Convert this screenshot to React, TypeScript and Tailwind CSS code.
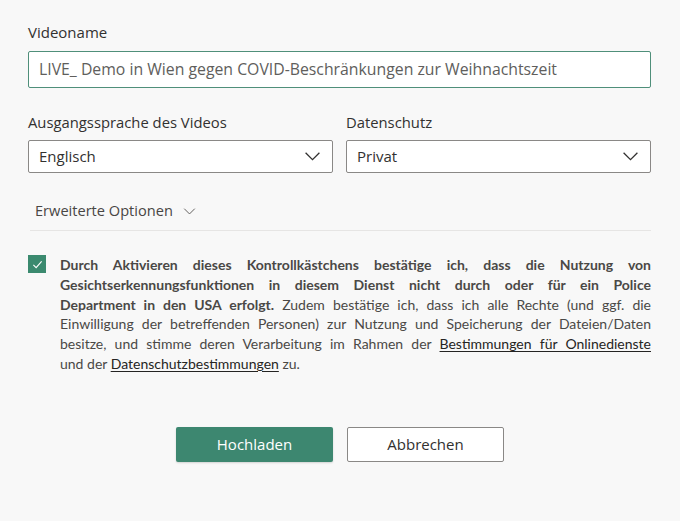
import React from "react";

function Chevron({ className = "" }: { className?: string }) {
  return (
    <svg viewBox="0 0 16 16" className={className} fill="none" stroke="currentColor" strokeWidth={1.2}>
      <path d="M1.5 4.5 L8 11 L14.5 4.5" />
    </svg>
  );
}

function Select({ value }: { value: string }) {
  return (
    <div className="flex h-[33px] items-center justify-between rounded-[2px] border border-[#8a8886] bg-white pl-[10px] pr-[11px] text-[15px] text-[#323130]">
      <span>{value}</span>
      <Chevron className="h-[17px] w-[17px] text-[#323130]" />
    </div>
  );
}

const justifyLine = "text-justify [text-align-last:justify] whitespace-nowrap";
const sans = "font-['Open_Sans',sans-serif]";

export default function App() {
  return (
    <div className={`min-h-[521px] w-full bg-[#f8f8f8] px-[28px] pt-[22px] pr-[29px] ${sans}`}>
      <div className="h-[20px] text-[15px] leading-[20px] text-[#323130]">Videoname</div>
      <div className="mt-[9px] flex h-[37px] items-center rounded-[2px] border border-[#4f8f7a] bg-white px-[10px] text-[15.8px] text-[#605e5c]">
        LIVE_ Demo in Wien gegen COVID-Beschränkungen zur Weihnachtszeit
      </div>

      <div className="mt-[24px] grid grid-cols-2 gap-x-[13px]">
        <div>
          <div className="h-[20px] text-[14.8px] leading-[20px] text-[#323130]">Ausgangssprache des Videos</div>
          <div className="mt-[8px]">
            <Select value="Englisch" />
          </div>
        </div>
        <div>
          <div className="h-[20px] text-[14.8px] leading-[20px] text-[#323130]">Datenschutz</div>
          <div className="mt-[8px]">
            <Select value="Privat" />
          </div>
        </div>
      </div>

      <div className="mt-[27px] flex items-center gap-[10px] pl-[7px] text-[14.6px] leading-[20px] text-[#484644]">
        <span>Erweiterte Optionen</span>
        <Chevron className="mt-[3px] h-[13px] w-[13px] text-[#605e5c]" />
      </div>
      <div className="ml-[2px] mt-[10px] h-px bg-[#e6e5e4]" />

      <div className="mt-[24px] flex gap-[14px]">
        <div className="flex h-[18px] w-[18px] shrink-0 items-center justify-center bg-[#3b8a6f]">
          <svg viewBox="0 0 12 12" className="h-[11px] w-[11px]" fill="none" stroke="white" strokeWidth={1.2}>
            <path d="M1.5 6.5 L4.5 9.5 L10.5 2.5" />
          </svg>
        </div>
        <div className="flex-1 font-['Lato',sans-serif] text-[14px] leading-[19.8px] text-[#4a4846]">
          <div className={`${justifyLine} font-bold`}>
            Durch Aktivieren dieses Kontrollkästchens bestätige ich, dass die Nutzung von
          </div>
          <div className={`${justifyLine} font-bold`}>
            Gesichtserkennungsfunktionen in diesem Dienst nicht durch oder für ein Police
          </div>
          <div className={justifyLine}>
            <span className="font-bold">Department in den USA erfolgt.</span> Zudem bestätige ich, dass ich alle Rechte (und ggf. die
          </div>
          <div className={justifyLine}>
            Einwilligung der betreffenden Personen) zur Nutzung und Speicherung der Dateien/Daten
          </div>
          <div className={justifyLine}>
            besitze, und stimme deren Verarbeitung im Rahmen der{" "}
            <span className="text-[#252423] underline underline-offset-2">Bestimmungen für Onlinedienste</span>
          </div>
          <div>
            und der <span className="text-[#252423] underline underline-offset-2">Datenschutzbestimmungen</span> zu.
          </div>
        </div>
      </div>

      <div className="mt-[53px] flex justify-center gap-[14px] pl-[1px]">
        <button className="h-[35px] w-[157px] rounded-[2px] bg-[#3d8770] text-[15px] text-white shadow-[0_1px_2px_rgba(0,0,0,0.15)]">
          Hochladen
        </button>
        <button className="h-[35px] w-[157px] rounded-[2px] border border-[#8a8886] bg-white text-[15px] text-[#323130]">
          Abbrechen
        </button>
      </div>
    </div>
  );
}
